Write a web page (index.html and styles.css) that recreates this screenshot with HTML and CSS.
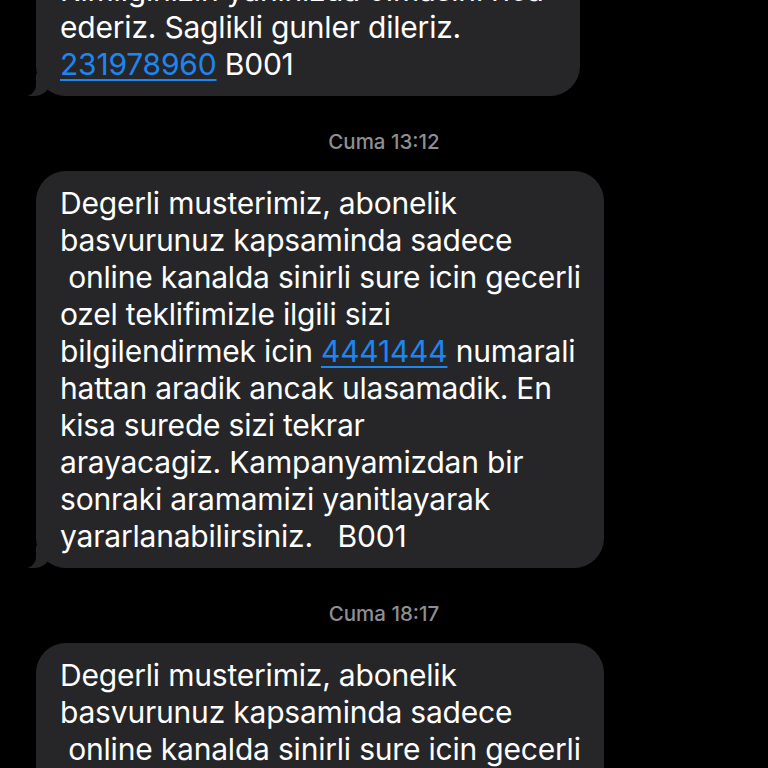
FILE: index.html
```html
<!doctype html>
<html>
	<head>
		<meta charset="UTF-8">
		<title>Mesajlar</title>
		<link rel="stylesheet" href="styles.css">
	</head>
<body>
	<div id="wrap">
		<div class="msg">
			<p class="bubble first">
				Kimliginizin yaninizda olmasini rica<br>
				ederiz. Saglikli gunler dileriz.<br>
				<a href="#">231978960</a> B001
			</p>
		</div>
		<p class="time">Cuma 13:12</p>
		<div class="msg">
			<p class="bubble wide">
				Degerli musterimiz, abonelik<br>
				basvurunuz kapsaminda sadece<br>
				&nbsp;online kanalda sinirli sure icin gecerli<br>
				ozel teklifimizle ilgili sizi<br>
				bilgilendirmek icin <a href="#">4441444</a> numarali<br>
				hattan aradik ancak ulasamadik. En<br>
				kisa surede sizi tekrar<br>
				arayacagiz. Kampanyamizdan bir<br>
				sonraki aramamizi yanitlayarak<br>
				yararlanabilirsiniz.&nbsp;&nbsp; B001
			</p>
		</div>
		<p class="time">Cuma 18:17</p>
		<div class="msg">
			<p class="bubble wide">
				Degerli musterimiz, abonelik<br>
				basvurunuz kapsaminda sadece<br>
				&nbsp;online kanalda sinirli sure icin gecerli<br>
				ozel teklifimizle ilgili sizi<br>
				bilgilendirmek icin <a href="#">4441444</a> numarali<br>
				hattan aradik ancak ulasamadik. En<br>
				kisa surede sizi tekrar<br>
				arayacagiz. Kampanyamizdan bir<br>
				sonraki aramamizi yanitlayarak<br>
				yararlanabilirsiniz.&nbsp;&nbsp; B001
			</p>
		</div>
	</div>
</body>
</html>
```

FILE: styles.css
```css
*{
	margin:0;
	padding:0;
}
html,body{
	background:#000;
}
body{
	font-family:Inter,"Noto Sans",sans-serif;
	overflow:hidden;
	height:768px;
}
a{
	color:#1c86f2;
	text-decoration:underline;
	text-decoration-thickness:2px;
	text-underline-offset:4px;
}
#wrap{
	margin-top:-42px;
}
.msg{
	display:flex;
	padding-left:36px;
}
.bubble{
	position:relative;
	background:#262628;
	color:#fff;
	font-size:30px;
	line-height:37px;
	white-space:nowrap;
	padding:14px 24px 13px 24px;
	border-radius:30px;
	letter-spacing:-0.2px;
}
.bubble.first{
	width:496px;
}
.bubble.wide{
	width:520px;
}
/* kuyruk */
.bubble:before{
	content:"";
	position:absolute;
	bottom:0;
	left:-8px;
	width:22px;
	height:22px;
	background:#262628;
	border-bottom-right-radius:16px 14px;
}
.bubble:after{
	content:"";
	position:absolute;
	bottom:0;
	left:-26px;
	width:26px;
	height:22px;
	background:#000;
	border-bottom-right-radius:11px;
}
.time{
	text-align:center;
	color:#8e8e93;
	font-size:20.5px;
	font-weight:500;
	line-height:24px;
	margin:34px 0 17px;
}
```
